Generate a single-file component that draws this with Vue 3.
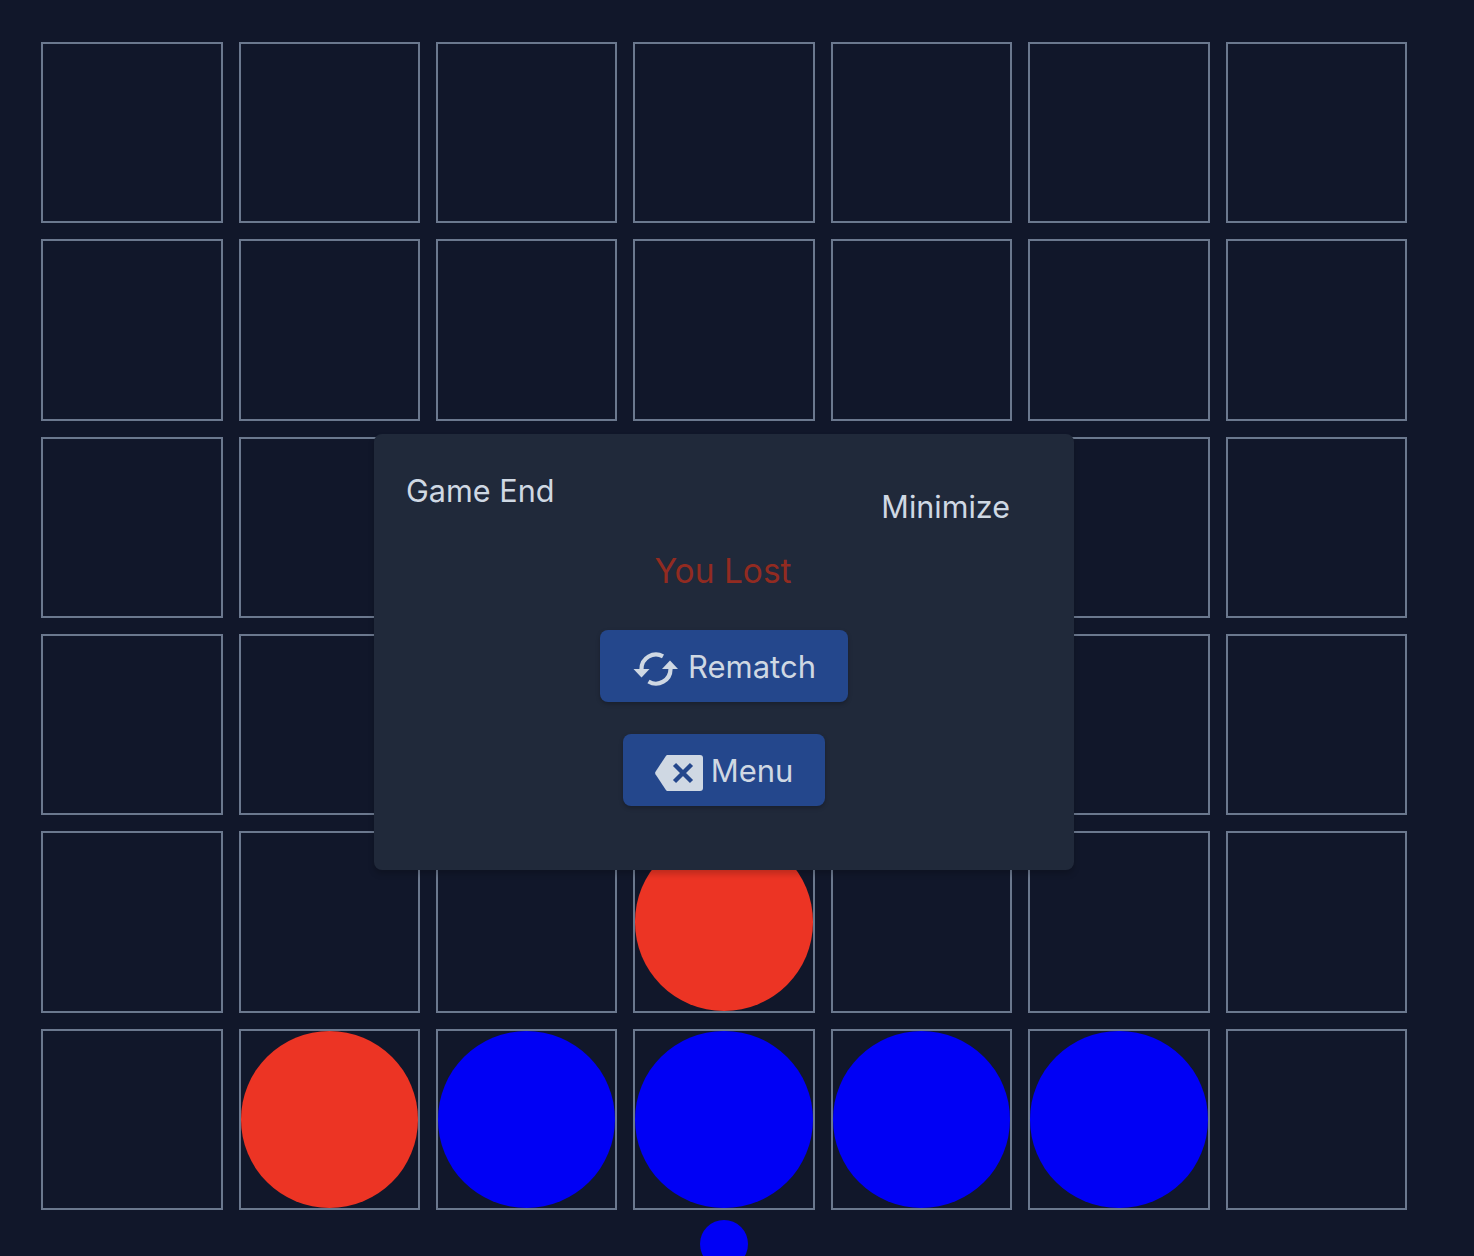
<script setup>
const rows = [
  ['', '', '', '', '', '', ''],
  ['', '', '', '', '', '', ''],
  ['', '', '', '', '', '', ''],
  ['', '', '', '', '', '', ''],
  ['', '', '', 'red', '', '', ''],
  ['', 'red', 'blue', 'blue', 'blue', 'blue', ''],
]
const cells = rows.flat()
</script>

<template>
  <main class="page">
    <section class="board">
      <div v-for="(cell, i) in cells" :key="i" class="cell">
        <div v-if="cell" class="disc" :class="cell"></div>
      </div>
    </section>
    <div class="turn"></div>
    <div class="dialog">
      <header class="dialog-head">
        <h2 class="title">Game End</h2>
        <button class="minimize">Minimize</button>
      </header>
      <p class="result">You Lost</p>
      <div class="actions">
        <button class="action">
          <svg class="icon" viewBox="0 0 48 36" width="48" height="36">
            <path d="M9.500 18A14.500 14.500 0 0 1 31 5.300" fill="none" stroke="currentColor" stroke-width="4.200"/>
            <path d="M38.500 18A14.500 14.500 0 0 1 16.500 30.500" fill="none" stroke="currentColor" stroke-width="4.200"/>
            <path d="M1.500 18h16l-8 8.500z" fill="currentColor"/>
            <path d="M30 18h16l-8-8.500z" fill="currentColor"/>
          </svg>
          Rematch
        </button>
        <button class="action">
          <svg class="icon" viewBox="0 0 48 36" width="48" height="36">
            <path d="M12.500 0H45a3 3 0 0 1 3 3v30a3 3 0 0 1-3 3H12.500a2 2 0 0 1-1.600-.9L.5 19.200a2.200 2.200 0 0 1 0-2.400L10.900.9a2 2 0 0 1 1.600-.9z" fill="currentColor"/>
            <path d="M19.500 9.500l17 17M36.500 9.500l-17 17" fill="none" stroke="#24478c" stroke-width="4.400"/>
          </svg>
          Menu
        </button>
      </div>
    </div>
  </main>
</template>

<style>
html, body { margin: 0; background: #11172a; overflow: hidden; }
</style>

<style scoped>
.page {
  position: relative;
  box-sizing: border-box;
  width: 1448.2px;
  height: 1256px;
  padding: 41.7px 41.1px 0;
  overflow: hidden;
  background: #11172a;
  font-family: Inter, "Liberation Sans", sans-serif;
}
.board {
  display: grid;
  grid-template-columns: repeat(7, 1fr);
  gap: 16px;
}
.cell {
  box-sizing: border-box;
  aspect-ratio: 1;
  border: 2px solid #6b788e;
}
.disc {
  width: 100%;
  height: 100%;
  border-radius: 50%;
}
.red { background: #ec3424; }
.blue { background: #0000f5; }
.turn {
  width: 48px;
  height: 48px;
  margin: 10px auto 0;
  border-radius: 50%;
  background: #0000f5;
}
.dialog {
  position: absolute;
  left: 374px;
  top: 434px;
  box-sizing: border-box;
  width: 700px;
  height: 436px;
  padding: 33px 32px 32px;
  border-radius: 8px;
  background: #20293a;
  box-shadow: 0 4px 6px rgba(0, 0, 0, .2);
  color: #cfd8e3;
}
.dialog-head {
  display: flex;
  justify-content: space-between;
}
.title {
  margin: 0;
  font-size: 30.6px;
  line-height: 48px;
  font-weight: 400;
}
.minimize {
  margin-top: 15px;
  padding: 0 32px;
  height: 48px;
  border: 0;
  background: none;
  color: inherit;
  font: inherit;
  font-size: 30.5px;
}
.result {
  margin: 17px 0 0;
  padding-right: 2px;
  text-align: center;
  font-size: 33.5px;
  line-height: 48px;
  color: #922b21;
}
.actions {
  display: flex;
  flex-direction: column;
  align-items: center;
  gap: 32px;
  margin-top: 35px;
}
.action {
  display: flex;
  align-items: center;
  gap: 8px;
  height: 72px;
  padding: 0 32px;
  border: 0;
  border-radius: 8px;
  background: #24478c;
  box-shadow: 0 2px 4px rgba(0, 0, 0, .25);
  color: inherit;
  font: inherit;
  font-size: 31px;
}
.icon {
  flex: none;
  margin-top: 6px;
}
</style>
